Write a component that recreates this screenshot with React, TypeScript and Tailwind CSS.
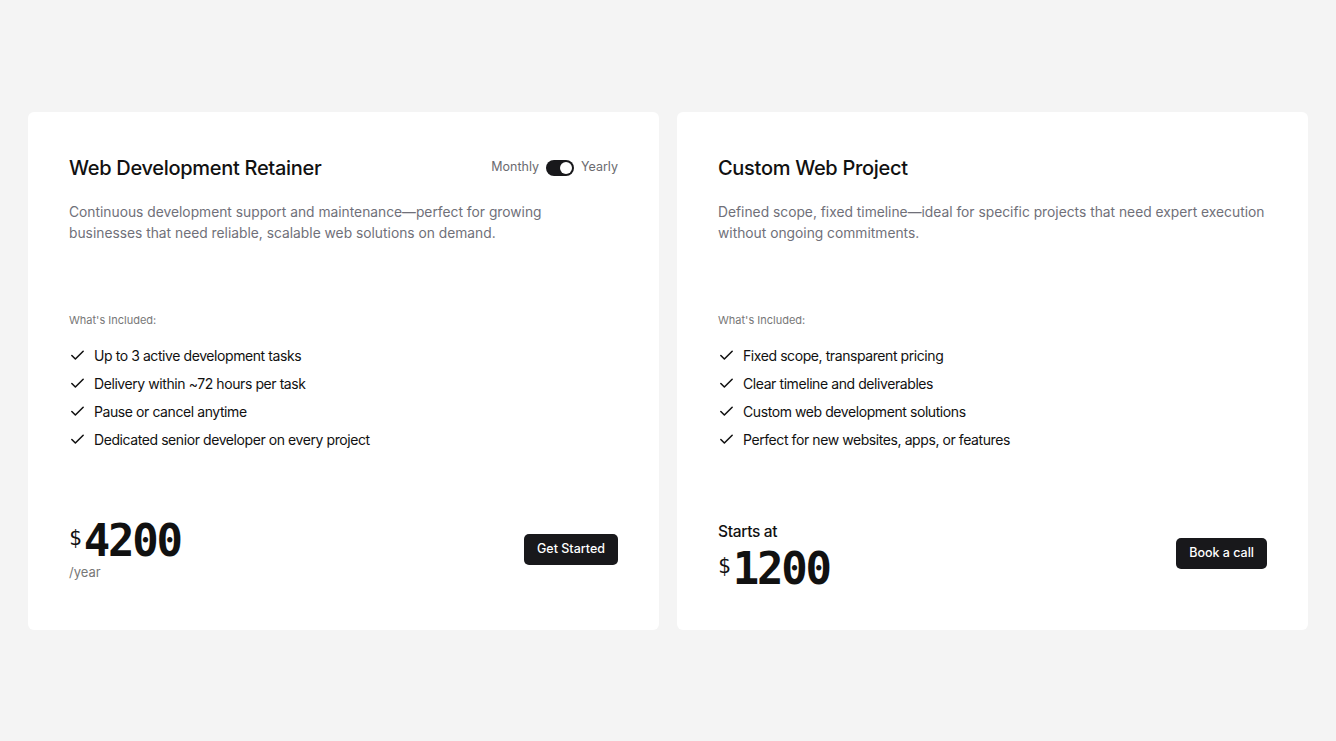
import { Check } from "lucide-react";

const sans = "font-['Inter','Noto_Sans',sans-serif]";

function Feature({ text }: { text: string }) {
  return (
    <li className="flex items-center gap-[8px] h-[28px]">
      <Check size={17} strokeWidth={2.2} className="text-[#111]" />
      <span className="text-[14px] text-[#111] tracking-[-0.03em]">{text}</span>
    </li>
  );
}

function Price({ amount }: { amount: string }) {
  return (
    <div className="flex items-start">
      <span className="text-[21px] leading-none text-[#111] mt-[8px] mr-[2px] font-['DejaVu_Sans_Mono',monospace]">$</span>
      <span className="text-[44px] leading-[42px] font-bold text-[#111] tracking-tighter font-['DejaVu_Sans_Mono',monospace]">
        {amount}
      </span>
    </div>
  );
}

export default function App() {
  return (
    <div className={`min-h-screen bg-[#f4f4f4] flex items-center px-[28px] gap-[18px] ${sans}`}>
      {/* Retainer */}
      <div className="flex-1 h-[518px] bg-white rounded-[6px] px-[41px] pt-[42px] pb-[40px] flex flex-col">
        <div className="flex items-center justify-between">
          <h2 className="text-[20px] font-medium tracking-[-0.015em] text-[#111] leading-[28px]">
            Web Development Retainer
          </h2>
          <div className="flex items-center gap-[7px] text-[12.5px] text-[#6b6b70]">
            <span>Monthly</span>
            <div className="w-[28px] h-[16px] rounded-full bg-[#18181b] flex items-center justify-end px-[2px]">
              <div className="w-[12px] h-[12px] rounded-full bg-white" />
            </div>
            <span>Yearly</span>
          </div>
        </div>
        <p className="mt-[20px] text-[13.8px] leading-[21px] text-[#707079] max-w-[500px]">
          Continuous development support and maintenance—perfect for growing businesses that need reliable, scalable web solutions on demand.
        </p>
        <div className="mt-[68px] text-[11px] text-[#777]">What's Included:</div>
        <ul className="mt-[13px]">
          <Feature text="Up to 3 active development tasks" />
          <Feature text="Delivery within ~72 hours per task" />
          <Feature text="Pause or cancel anytime" />
          <Feature text="Dedicated senior developer on every project" />
        </ul>
        <div className="mt-auto mb-[10px] flex items-center justify-between">
          <div>
            <Price amount="4200" />
            <div className="mt-[2px] text-[13px] leading-[16px] text-[#777]">/year</div>
          </div>
          <button className="h-[31px] px-[13px] rounded-[5px] bg-[#18181b] text-white text-[12.5px] font-medium">
            Get Started
          </button>
        </div>
      </div>

      {/* Custom project */}
      <div className="flex-1 h-[518px] bg-white rounded-[6px] px-[41px] pt-[42px] pb-[40px] flex flex-col">
        <h2 className="text-[20px] font-medium tracking-[-0.015em] text-[#111] leading-[28px]">
          Custom Web Project
        </h2>
        <p className="mt-[20px] text-[13.8px] leading-[21px] text-[#707079]">
          Defined scope, fixed timeline—ideal for specific projects that need expert execution without ongoing commitments.
        </p>
        <div className="mt-[68px] text-[11px] text-[#777]">What's Included:</div>
        <ul className="mt-[13px]">
          <Feature text="Fixed scope, transparent pricing" />
          <Feature text="Clear timeline and deliverables" />
          <Feature text="Custom web development solutions" />
          <Feature text="Perfect for new websites, apps, or features" />
        </ul>
        <div className="mt-auto flex items-end justify-between">
          <div>
            <div className="text-[15.5px] font-medium text-[#111] tracking-[-0.02em] mb-[4px]">Starts at</div>
            <Price amount="1200" />
          </div>
          <button className="h-[31px] px-[13px] rounded-[5px] bg-[#18181b] text-white text-[12.5px] font-medium mb-[21px]">
            Book a call
          </button>
        </div>
      </div>
    </div>
  );
}
